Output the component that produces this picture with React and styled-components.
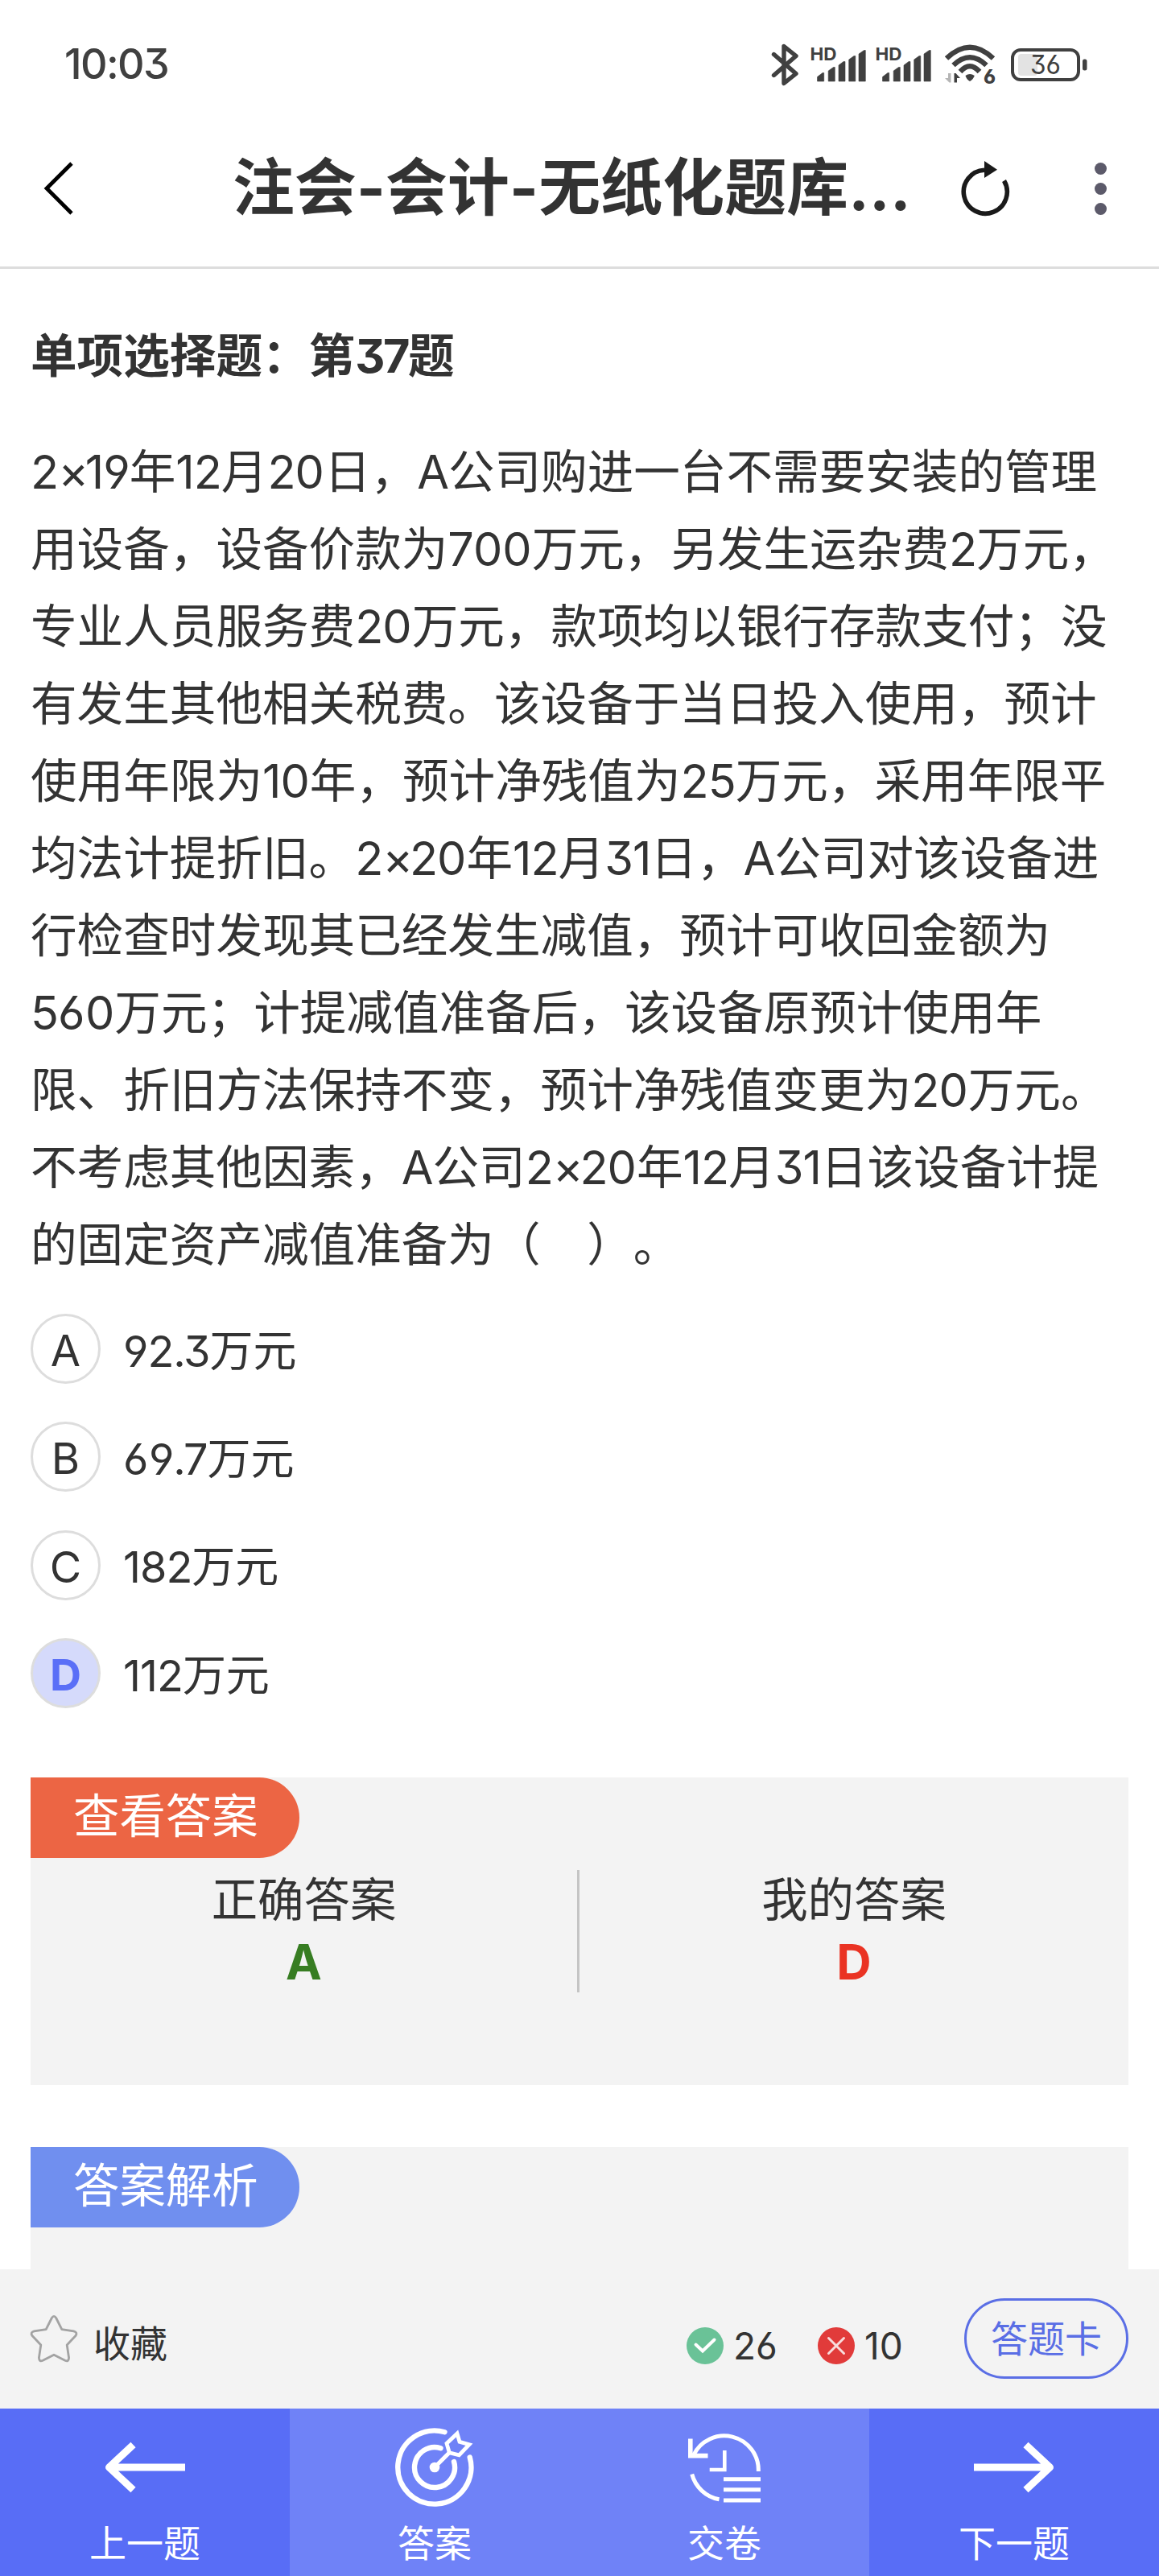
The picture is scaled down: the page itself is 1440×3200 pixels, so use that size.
import React from 'react';
import styled, { createGlobalStyle } from 'styled-components';

const GlobalStyle = createGlobalStyle`
  :root {
    --text: #333;
    --line: #ddd;
    --panel: #f3f3f3;
    --primary: #586df6;
    --primary-light: #6f82f7;
  }
  * {
    box-sizing: border-box;
  }
  body {
    margin: 0;
    background: #fff;
    color: var(--text);
    font-family: Inter, 'Noto Sans CJK SC', sans-serif;
    font-feature-settings: 'ss01', 'cv09';
    text-spacing-trim: space-all;
  }
  svg {
    display: block;
    flex: none;
    overflow: visible;
  }
`;

const Screen = styled.div`
  display: flex;
  flex-direction: column;
  width: 1440px;
  height: 3200px;
  overflow: hidden;
`;

const StatusBar = styled.div`
  display: flex;
  align-items: center;
  justify-content: space-between;
  height: 160px;
  padding: 0 90px 0 80px;
  color: #404040;
`;

const Clock = styled.span`
  font-size: 52px;
  font-weight: 500;
  line-height: 60px;
  letter-spacing: -1.6px;
`;

const StatusIcons = styled.div`
  display: flex;
  align-items: center;
`;

const StatusIcon = styled.svg`
  margin-left: ${({ $gap }) => $gap || 0}px;
`;

const Header = styled.header`
  display: flex;
  align-items: center;
  height: 174px;
  padding: 0 65px 23px 54px;
  border-bottom: 3px solid var(--line);
`;

const Title = styled.h1`
  margin: 0 0 0 195px;
  width: 846px;
  font-size: 76.8px;
  font-weight: 700;
  line-height: 90px;
  letter-spacing: 0.2px;
  white-space: nowrap;
`;

const Refresh = styled.svg`
  margin-left: 58px;
`;

const More = styled.div`
  display: flex;
  flex-direction: column;
  gap: 10px;
  margin-left: auto;
  span {
    width: 15px;
    height: 15px;
    border-radius: 50%;
    background: #5c5a6a;
  }
`;

const Main = styled.main`
  flex: 1;
  min-height: 0;
  overflow: hidden;
  padding: 78px 38px 0;
`;

const QuestionType = styled.h2`
  margin: 0 0 66px;
  font-size: 57.6px;
  font-weight: 700;
  line-height: 60px;
`;

const Question = styled.p`
  margin: 0 0 38px;
  font-size: 57.6px;
  line-height: 96px;
  white-space: nowrap;
`;

const Line = styled.span`
  display: block;
`;

const Latin = styled.span`
  letter-spacing: ${({ $spacing }) => $spacing}px;
`;

const Options = styled.ul`
  display: flex;
  flex-direction: column;
  gap: 47.4px;
  margin: 0;
  padding: 0;
  list-style: none;
`;

const Option = styled.li`
  display: flex;
  align-items: center;
  gap: 28px;
  height: 87px;
  font-size: 54px;
  line-height: 87px;
`;

const Mark = styled.span`
  display: flex;
  justify-content: center;
  width: 87px;
  height: 87px;
  border: 3px solid var(--line);
  border-radius: 50%;
  line-height: 85px;
  ${({ $selected }) =>
    $selected &&
    `
    background: #d5dafb;
    color: #5a6ff7;
    font-weight: 700;
  `}
`;

const OptionText = styled.span`
  padding-top: 5px;
`;

const Panel = styled.section`
  height: ${({ $height }) => $height}px;
  margin-top: ${({ $top }) => $top}px;
  background: var(--panel);
`;

const Tag = styled.div`
  width: 334px;
  height: 100px;
  padding-left: 53px;
  border-radius: 0 50px 50px 0;
  background: ${({ $color }) => $color};
  color: #fff;
  font-size: 57.4px;
  line-height: 97px;
`;

const Answers = styled.div`
  display: flex;
  margin-top: 15px;
`;

const Answer = styled.div`
  display: flex;
  flex-direction: column;
  align-items: center;
  width: 679px;
  height: 152px;
  font-size: 57.4px;
  line-height: 74px;
  & + & {
    width: 685px;
    border-left: 3px solid #c4c4c4;
  }
`;

const AnswerLetter = styled.strong`
  color: ${({ $color }) => $color};
  font-size: 60px;
  line-height: 80px;
`;

const Toolbar = styled.div`
  display: flex;
  align-items: center;
  flex: none;
  height: 173px;
  padding: 0 38px;
  background: var(--panel);
  font-size: 46px;
`;

const Favorite = styled.div`
  display: flex;
  align-items: center;
  gap: 20px;
  svg {
    margin-bottom: 1px;
  }
  span {
    padding-top: 5px;
  }
`;

const Count = styled.div`
  display: flex;
  align-items: center;
  gap: 12px;
  margin-left: ${({ $left }) => $left};
  padding-top: 17px;
  width: 163px;
`;

const SheetButton = styled.button`
  width: 204px;
  height: 100px;
  margin: 0 0 2px 19px;
  padding: 0;
  border: 3px solid #5a6ee5;
  border-radius: 50px;
  background: none;
  color: #5a6ee5;
  font: inherit;
  line-height: 90px;
`;

const Nav = styled.nav`
  display: grid;
  grid-template-columns: repeat(4, 1fr);
  flex: none;
  height: 208px;
`;

const NavItem = styled.div`
  display: flex;
  flex-direction: column;
  align-items: center;
  background: ${({ $light }) =>
    $light ? 'var(--primary-light)' : 'var(--primary)'};
  color: #fff;
  font-size: 46px;
  line-height: 60px;
`;

const NavIcon = styled.div`
  display: flex;
  align-items: center;
  height: 146px;
  margin-bottom: -9px;
`;

const QUESTION = [
  '2×19年12月20日，A公司购进一台不需要安装的管理',
  '用设备，设备价款为700万元，另发生运杂费2万元，',
  '专业人员服务费20万元，款项均以银行存款支付；没',
  '有发生其他相关税费。该设备于当日投入使用，预计',
  '使用年限为10年，预计净残值为25万元，采用年限平',
  '均法计提折旧。2×20年12月31日，A公司对该设备进',
  '行检查时发现其已经发生减值，预计可收回金额为',
  '560万元；计提减值准备后，该设备原预计使用年',
  '限、折旧方法保持不变，预计净残值变更为20万元。',
  '不考虑其他因素，A公司2×20年12月31日该设备计提',
  '的固定资产减值准备为（　）。',
];

const OPTIONS = [
  { id: 'A', text: '92.3万元' },
  { id: 'B', text: '69.7万元' },
  { id: 'C', text: '182万元' },
  { id: 'D', text: '112万元' },
];

// letter spacing of the non-hanzi glyphs, px
const SPACING = { '×': -4.5, '.': -3, 0: 0, 6: 0.5 };

function renderMixed(text) {
  return text.split(/([0-9A-Z×.])/).map((part, i) =>
    i % 2 ? (
      <Latin key={i} $spacing={SPACING[part] ?? -1}>
        {part}
      </Latin>
    ) : (
      part
    )
  );
}

function BluetoothIcon() {
  return (
    <StatusIcon width="33" height="53" viewBox="0 0 33 53">
      <path
        d="M2.5 13.5 30 37.5 15 49.5V3.5L30 15.5 2.5 39.5"
        fill="none"
        stroke="#404040"
        strokeWidth="5.4"
        strokeLinecap="round"
        strokeLinejoin="round"
      />
    </StatusIcon>
  );
}

function SignalIcon({ gap }) {
  return (
    <StatusIcon $gap={gap} width="68" height="43" viewBox="0 0 68 43">
      <text
        x="-1.5"
        y="16"
        fontSize="21.5"
        fontWeight="700"
        textLength="33"
        lengthAdjust="spacingAndGlyphs"
        fill="#404040"
      >
        HD
      </text>
      <path
        d="M7.5 36.5 14 31.5H15.7V42H7.5ZM21.2 29 27.5 24.5H29.3V42H21.2ZM34 22 40 17.5H42V42H34ZM46.7 15 53 10.5H54.8V42H46.7ZM59 8 65.5 3.5H67.3V42H59Z"
        fill="#404040"
        stroke="#404040"
        strokeWidth=".6"
        strokeLinejoin="round"
      />
    </StatusIcon>
  );
}

function WifiIcon() {
  return (
    <StatusIcon $gap={17} width="63" height="49" viewBox="0 0 63 49">
      <g fill="none" stroke="#404040" strokeWidth="6.4">
        <path d="M2 16.5Q31 -11 60 16.5" />
        <path d="M10.5 25Q31 5.5 51.5 25" />
        <path d="M19 33Q31 19.5 43 33" />
      </g>
      <path d="M25.5 38Q31 34 36.8 38Q35 43 31 45Q27 43 25.5 38Z" fill="#404040" />
      <path d="M7.5 35V46.5H5.5L0 41H4V35Z" fill="#b5b5b5" />
      <path d="M11.5 46.5V35H13.5L19 41H15V46.5Z" fill="#404040" />
      <text x="48" y="48" fontSize="24" fontWeight="800" fill="#404040">
        6
      </text>
    </StatusIcon>
  );
}

function BatteryIcon() {
  return (
    <StatusIcon $gap={19} width="94" height="41" viewBox="0 0 94 41">
      <rect x="9" y="7" width="24" height="27" rx="4" fill="#e3e3e3" />
      <rect
        x="2"
        y="2"
        width="82"
        height="37"
        rx="10"
        fill="none"
        stroke="#404040"
        strokeWidth="4"
      />
      <rect x="89" y="13.5" width="5.5" height="14" rx="2.5" fill="#404040" />
      <text
        x="43"
        y="32.3"
        fontSize="33"
        textAnchor="middle"
        textLength="38"
        lengthAdjust="spacingAndGlyphs"
        fill="#404040"
      >
        36
      </text>
    </StatusIcon>
  );
}

function TargetIcon() {
  return (
    <svg width="100" height="100" viewBox="0 0 100 100">
      <g
        fill="none"
        stroke="#fff"
        strokeWidth="6.4"
        strokeLinecap="round"
        strokeLinejoin="round"
      >
        <path d="M62.5 6.2A45.6 45.6 0 1 0 93.7 37.5" />
        <path d="M57.5 26.2A25 25 0 1 0 74 43" />
        <path d="M50 50 68.3 31.7" strokeWidth="5" />
        <path
          d="M78 8 81 18.2 93 21.7 80.4 34.8 68.3 31.7 65 20.3Z"
          strokeWidth="4.8"
          strokeLinejoin="miter"
        />
      </g>
      <circle cx="50" cy="50" r="6.3" fill="#fff" />
    </svg>
  );
}

function SubmitIcon() {
  return (
    <svg width="90" height="88" viewBox="0 0 90 88">
      <g fill="none" stroke="#fff" strokeWidth="5">
        <path d="M6.5 29A42.5 42.5 0 0 1 87.3 49" />
        <path d="M4.7 52.5A43 43 0 0 0 38.5 83.8" />
        <path d="M2.8 8.5V29.6H24.5" strokeWidth="5.6" />
        <path d="M45.3 23V47H26.7" strokeWidth="4.6" />
        <path d="M44 58.7H90M44 71.7H90M44 85H90" />
      </g>
    </svg>
  );
}

function ArrowIcon({ right }) {
  return (
    <svg width="100" height="62" viewBox="0 0 100 62">
      <path
        d="M100 31H6M35.5 3 5.5 31 35.5 59"
        transform={right ? 'matrix(-1 0 0 1 100 0)' : undefined}
        fill="none"
        stroke="#fff"
        strokeWidth="9"
        strokeLinejoin="round"
      />
    </svg>
  );
}

function App() {
  return (
    <Screen>
      <GlobalStyle />
      <StatusBar>
        <Clock>10:03</Clock>
        <StatusIcons>
          <BluetoothIcon />
          <SignalIcon gap={16} />
          <SignalIcon gap={13} />
          <WifiIcon />
          <BatteryIcon />
        </StatusIcons>
      </StatusBar>

      <Header>
        <svg width="40" height="66" viewBox="0 0 40 66">
          <path d="M35 2 4 33 35 64" fill="none" stroke="#000" strokeWidth="4.8" />
        </svg>
        <Title>注会-会计-无纸化题库...</Title>
        <Refresh width="62" height="68" viewBox="0 0 62 68">
          <path
            d="M30 11.3A27 27 0 1 0 54.5 24.5"
            fill="none"
            stroke="#1a1a1a"
            strokeWidth="5.6"
          />
          <path d="M30 0 46 10.7 30 21Z" fill="#1a1a1a" />
        </Refresh>
        <More>
          <span />
          <span />
          <span />
        </More>
      </Header>

      <Main>
        <QuestionType>
          单项选择题：第<Latin $spacing={-2.5}>37</Latin>题
        </QuestionType>
        <Question>
          {QUESTION.map(line => (
            <Line key={line}>{renderMixed(line)}</Line>
          ))}
        </Question>
        <Options>
          {OPTIONS.map(({ id, text }) => (
            <Option key={id}>
              <Mark $selected={id === 'D'}>{id}</Mark>
              <OptionText>{renderMixed(text)}</OptionText>
            </Option>
          ))}
        </Options>

        <Panel $top={86} $height={382}>
          <Tag $color="#ec6544">查看答案</Tag>
          <Answers>
            <Answer>
              正确答案
              <AnswerLetter $color="#377d22">A</AnswerLetter>
            </Answer>
            <Answer>
              我的答案
              <AnswerLetter $color="#ea3323">D</AnswerLetter>
            </Answer>
          </Answers>
        </Panel>
        <Panel $top={77} $height={400}>
          <Tag $color="#708fef">答案解析</Tag>
        </Panel>
      </Main>

      <Toolbar>
        <Favorite>
          <svg width="58" height="58" viewBox="0 0 58 58">
            <path
              d="M26.3 3.5Q29 -.8 31.7 3.5L38.8 17.6 53.5 19.9Q58.8 21.3 56 25.5L45.2 37 47.6 53Q47.3 58.3 42.8 56.3L29 49.2 15.2 56.3Q10.7 58.3 10.4 53L12.8 37 2 25.5Q-.8 21.3 4.5 19.9L19.2 17.6Z"
              fill="none"
              stroke="#a3a3a3"
              strokeWidth="2.8"
              strokeLinejoin="round"
            />
          </svg>
          <span>收藏</span>
        </Favorite>
        <Count $left="auto">
          <svg width="46" height="46" viewBox="0 0 46 46">
            <circle cx="23" cy="23" r="23" fill="#6ac297" />
            <path
              d="M11.5 21.5 20 29.5 34.5 15.5"
              fill="none"
              stroke="#fff"
              strokeWidth="4"
              strokeLinecap="round"
            />
          </svg>
          26
        </Count>
        <Count $left="0">
          <svg width="46" height="46" viewBox="0 0 46 46">
            <circle cx="23" cy="23" r="23" fill="#e13b3a" />
            <path
              d="M13.5 13.5 32.5 32.5M32.5 13.5 13.5 32.5"
              stroke="#f8dcdc"
              strokeWidth="3"
              strokeLinecap="round"
            />
          </svg>
          10
        </Count>
        <SheetButton>答题卡</SheetButton>
      </Toolbar>

      <Nav>
        <NavItem>
          <NavIcon>
            <ArrowIcon />
          </NavIcon>
          上一题
        </NavItem>
        <NavItem $light>
          <NavIcon>
            <TargetIcon />
          </NavIcon>
          答案
        </NavItem>
        <NavItem $light>
          <NavIcon>
            <SubmitIcon />
          </NavIcon>
          交卷
        </NavItem>
        <NavItem>
          <NavIcon>
            <ArrowIcon right />
          </NavIcon>
          下一题
        </NavItem>
      </Nav>
    </Screen>
  );
}

export default App;
